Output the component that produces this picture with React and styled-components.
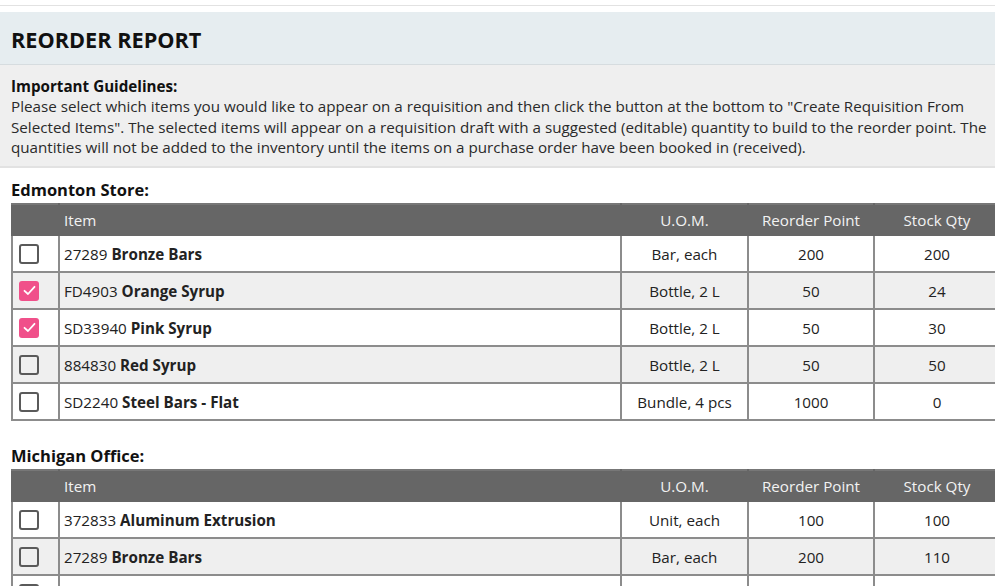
import React from 'react'
import styled, { createGlobalStyle } from 'styled-components'

const GlobalStyle = createGlobalStyle`
  body {
    margin: 0;
    background: #ffffff;
    font-family: 'Open Sans', 'Liberation Sans', sans-serif;
    color: #222;
    overflow: hidden;
  }
`

const Page = styled.div`
  width: 1010px;
  padding-top: 5px;
`

const TopRule = styled.div`
  height: 1px;
  background: #e2e2e2;
  margin-bottom: 6px;
`

const TitleBar = styled.header`
  display: flex;
  align-items: center;
  height: 52px;
  padding: 0 11px;
  background: #e6edf0;
  border-bottom: 1px solid #d6dcdf;
`

const Title = styled.h1`
  margin: 0;
  padding-top: 2px;
  font-size: 21.7px;
  font-weight: 700;
  color: #111;
`

const Guidelines = styled.section`
  background: #efefef;
  padding: 11px 11px 9px;
  border-bottom: 2px solid #e2e2e2;
  font-size: 15.2px;
  line-height: 20.3px;
  color: #2a2a2a;
  white-space: nowrap;
`

const GuideTitle = styled.div`
  font-weight: 700;
  color: #111;
`

const Store = styled.section`
  padding: 12px 0 0 11px;
  margin-bottom: 13px;
`

const StoreName = styled.h2`
  margin: 0 0 3px;
  font-size: 16.5px;
  font-weight: 700;
  line-height: 20px;
  color: #111;
`

const Table = styled.table`
  border-collapse: collapse;
  width: 988px;
  table-layout: fixed;
  font-size: 15.2px;
`

const HeadCell = styled.th`
  background: #666666;
  color: #f2f2f2;
  font-weight: 400;
  height: 29px;
  padding: 0 4px;
  text-align: ${p => (p.$left ? 'left' : 'center')};
  border: 2px solid #666666;
  border-top: 2px solid #777;
`

const Row = styled.tr`
  background: ${p => (p.$alt ? '#efefef' : '#ffffff')};
`

const Cell = styled.td`
  height: 35px;
  padding: 0 4px;
  text-align: ${p => (p.$left ? 'left' : 'center')};
  border: 2px solid #8c8c8c;
  color: #222;
  white-space: nowrap;
`

const Box = styled.span`
  display: flex;
  align-items: center;
  justify-content: center;
  width: 20px;
  height: 20px;
  margin-left: 2px;
  box-sizing: border-box;
  border-radius: 3px;
  border: ${p => (p.$on ? 'none' : '2px solid #5a5a5a')};
  background: ${p => (p.$on ? '#f0508a' : 'transparent')};
`

const Check = ({ on }) => (
  <Box $on={on}>
    {on && (
      <svg width="13" height="11" viewBox="0 0 13 11">
        <path d="M1.5 5.8 L5 9 L11.5 1.8" fill="none" stroke="#fff" strokeWidth="1.8" strokeLinecap="round" strokeLinejoin="round" />
      </svg>
    )}
  </Box>
)

const stores = [
  {
    name: 'Edmonton Store:',
    rows: [
      { code: '27289', name: 'Bronze Bars', uom: 'Bar, each', point: 200, qty: 200 },
      { code: 'FD4903', name: 'Orange Syrup', uom: 'Bottle, 2 L', point: 50, qty: 24, on: true },
      { code: 'SD33940', name: 'Pink Syrup', uom: 'Bottle, 2 L', point: 50, qty: 30, on: true },
      { code: '884830', name: 'Red Syrup', uom: 'Bottle, 2 L', point: 50, qty: 50 },
      { code: 'SD2240', name: 'Steel Bars - Flat', uom: 'Bundle, 4 pcs', point: 1000, qty: 0 }
    ]
  },
  {
    name: 'Michigan Office:',
    rows: [
      { code: '372833', name: 'Aluminum Extrusion', uom: 'Unit, each', point: 100, qty: 100 },
      { code: '27289', name: 'Bronze Bars', uom: 'Bar, each', point: 200, qty: 110 },
      { code: '', name: '', uom: '', point: '', qty: '' }
    ]
  }
]

export default function App() {
  return (
    <Page>
      <GlobalStyle />
      <TopRule />
      <TitleBar>
        <Title>REORDER REPORT</Title>
      </TitleBar>
      <Guidelines>
        <GuideTitle>Important Guidelines:</GuideTitle>
        Please select which items you would like to appear on a requisition and then click the button at the bottom to "Create Requisition From<br />
        Selected Items". The selected items will appear on a requisition draft with a suggested (editable) quantity to build to the reorder point. The<br />
        quantities will not be added to the inventory until the items on a purchase order have been booked in (received).
      </Guidelines>
      {stores.map(store => (
        <Store key={store.name}>
          <StoreName>{store.name}</StoreName>
          <Table>
            <colgroup>
              <col style={{ width: 47 }} />
              <col style={{ width: 562 }} />
              <col style={{ width: 127 }} />
              <col style={{ width: 126 }} />
              <col style={{ width: 126 }} />
            </colgroup>
            <thead>
              <tr>
                <HeadCell />
                <HeadCell $left>Item</HeadCell>
                <HeadCell>U.O.M.</HeadCell>
                <HeadCell>Reorder Point</HeadCell>
                <HeadCell>Stock Qty</HeadCell>
              </tr>
            </thead>
            <tbody>
              {store.rows.map((r, i) => (
                <Row key={i} $alt={i % 2 === 1}>
                  <Cell $left><Check on={r.on} /></Cell>
                  <Cell $left>{r.code} <strong>{r.name}</strong></Cell>
                  <Cell>{r.uom}</Cell>
                  <Cell>{r.point}</Cell>
                  <Cell>{r.qty}</Cell>
                </Row>
              ))}
            </tbody>
          </Table>
        </Store>
      ))}
    </Page>
  )
}
